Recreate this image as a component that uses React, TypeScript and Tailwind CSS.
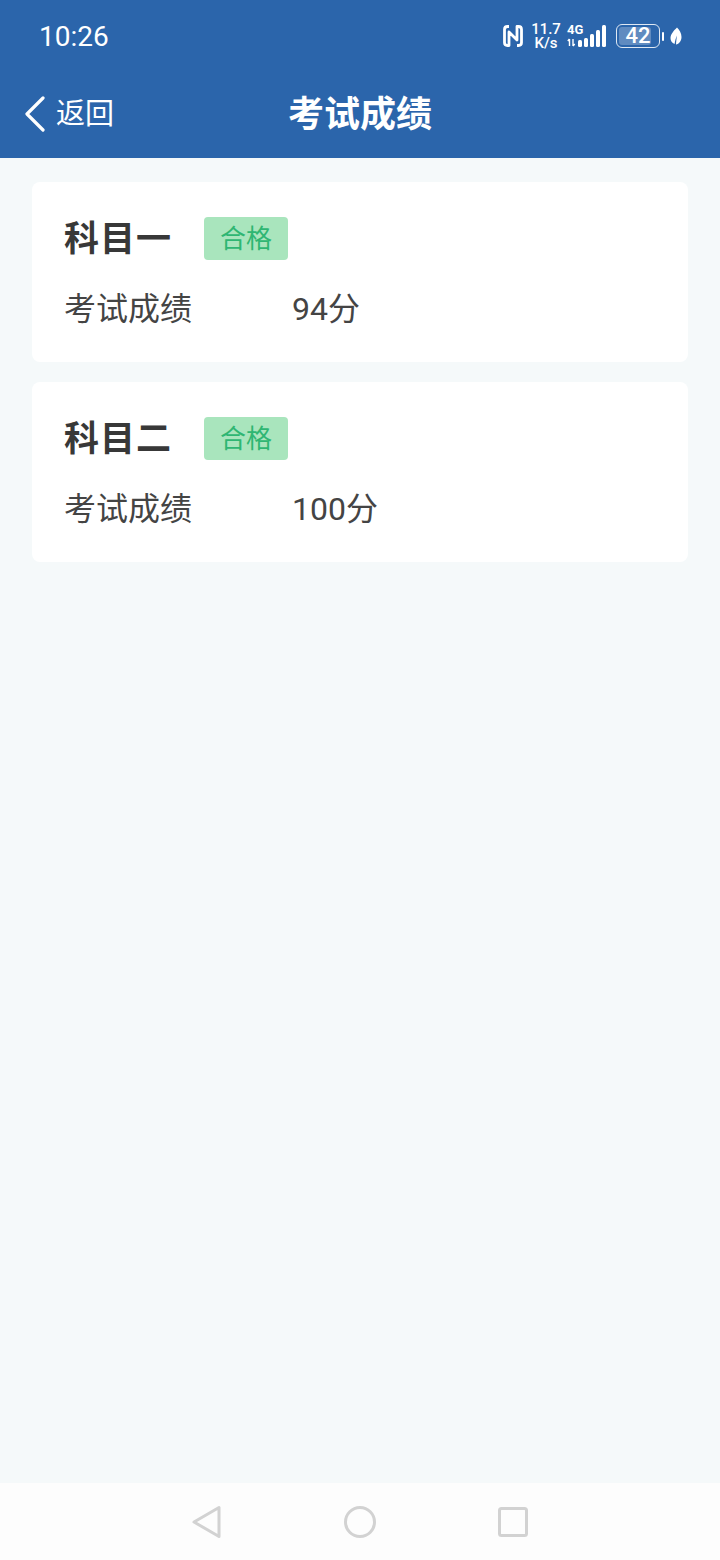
const fontStack = { fontFamily: '"Roboto", "Noto Sans CJK SC", sans-serif' };

const subjects = [
  { name: "科目一", score: "94分" },
  { name: "科目二", score: "100分" },
];

function StatusIcons() {
  return (
    <div className="flex items-center text-white">
      {/* NFC */}
      <svg width="20" height="24" viewBox="0 0 20 24" fill="none" className="mr-[9px]">
        <path d="M6 2.5H4.5C2.8 2.5 1.5 3.8 1.5 5.5V18.5C1.5 20.2 2.8 21.5 4.5 21.5H6V8L14 16V2.5H15.5C17.2 2.5 18.5 3.8 18.5 5.5V18.5C18.5 20.2 17.2 21.5 15.5 21.5H14" stroke="white" strokeWidth="2.8" strokeLinejoin="round" />
      </svg>
      <div className="flex flex-col items-center w-[28px] mr-[7px] text-[15px] leading-[14px] font-medium">
        <span>11.7</span>
        <span>K/s</span>
      </div>
      {/* signal */}
      <div className="relative w-[42px] h-[24px] mr-[7px]">
        <span className="absolute left-0 top-0 text-[13px] leading-[12px] font-bold">4G</span>
        <svg width="42" height="24" viewBox="0 0 42 24" className="absolute left-0 top-0">
          <path d="M2.5 15v7M0.8 17l1.7-2M6 15v7M6 22l1.7-2" stroke="white" strokeWidth="1.4" fill="none" />
          <rect x="11" y="16" width="4" height="7" rx="1.5" fill="white" />
          <rect x="17" y="14" width="4" height="9" rx="1.5" fill="white" />
          <rect x="23" y="10" width="4" height="13" rx="1.5" fill="white" />
          <rect x="29" y="6" width="4" height="17" rx="1.5" fill="white" />
          <rect x="35" y="1" width="4" height="22" rx="1.5" fill="white" />
        </svg>
      </div>
      {/* battery */}
      <div className="relative flex items-center w-[44px] h-[24px] mr-[2px] rounded-[6px] border-[1.5px] border-[#dfe8f3] p-[2px]">
        <div className="w-[32px] h-full rounded-[3px] bg-white/25" />
        <span className="absolute inset-0 text-center text-[22px] leading-[21px] font-medium">42</span>
      </div>
      <div className="w-[2px] h-[9px] mr-[6px] rounded-full bg-white" />
      {/* leaf */}
      <svg width="12" height="18" viewBox="0 0 12 18">
        <path d="M7 0.5C9.5 3 11.5 6 11.5 10C11.5 14 9 17 6 17.5C6.2 14 6.6 11 7 8.5C5.8 11 5 14 4.6 17C2 16 0.5 14 0.5 11C0.5 7 4 3.5 7 0.5Z" fill="white" />
      </svg>
    </div>
  );
}

function ScoreCard({ name, score }: { name: string; score: string }) {
  return (
    <div className="h-[180px] rounded-[8px] bg-white px-[32px] pt-[35px]">
      <div className="flex items-center h-[43px]">
        <h2 className="w-[140px] pt-[2px] text-[35px] leading-[43px] font-bold tracking-[1px] text-[#383838]">{name}</h2>
        <span className="flex items-center justify-center w-[84px] h-[43px] pt-[2px] rounded-[4px] bg-[#a9e5bd] text-[26px] text-[#2fb673]">合格</span>
      </div>
      <div className="flex items-center mt-[28px] h-[42px] text-[32px] text-[#444444]">
        <span className="w-[228px]">考试成绩</span>
        <span>{score}</span>
      </div>
    </div>
  );
}

export default function App() {
  return (
    <div className="flex flex-col h-[1560px] w-[720px] overflow-hidden bg-[#f5f9fa]" style={fontStack}>
      <header className="bg-[#2b65ab] h-[158px] shrink-0 text-white">
        <div className="flex items-center justify-between h-[72px] pl-[39px] pr-[38px]">
          <span className="pt-[1px] text-[28px] leading-none">10:26</span>
          <StatusIcons />
        </div>
        <div className="relative flex items-center justify-center h-[86px]">
          <div className="absolute left-[24px] top-[24px] flex items-center">
            <svg width="22" height="36" viewBox="0 0 22 36" fill="none">
              <path d="M19 2L3 18L19 34" stroke="white" strokeWidth="3.2" strokeLinecap="round" strokeLinejoin="round" />
            </svg>
            <span className="ml-[10px] text-[29px] leading-[36px]">返回</span>
          </div>
          <h1 className="text-[36px] font-bold leading-none">考试成绩</h1>
        </div>
      </header>

      <main className="flex-1 flex flex-col gap-[20px] px-[32px] pt-[24px]">
        {subjects.map((s) => (
          <ScoreCard key={s.name} name={s.name} score={s.score} />
        ))}
      </main>

      {/* nav bar */}
      <nav className="flex items-center justify-center gap-[122px] h-[77px] shrink-0 bg-[#fdfdfd]">
        <svg width="30" height="34" viewBox="0 0 30 34" fill="none">
          <path d="M27 2.5V31.5L2 17Z" stroke="#d2d2d2" strokeWidth="3" strokeLinejoin="round" />
        </svg>
        <svg width="32" height="32" viewBox="0 0 32 32" fill="none">
          <circle cx="16" cy="16" r="14.5" stroke="#d2d2d2" strokeWidth="3" />
        </svg>
        <svg width="30" height="30" viewBox="0 0 30 30" fill="none">
          <rect x="1.5" y="1.5" width="27" height="27" rx="2" stroke="#d2d2d2" strokeWidth="3" />
        </svg>
      </nav>
    </div>
  );
}
